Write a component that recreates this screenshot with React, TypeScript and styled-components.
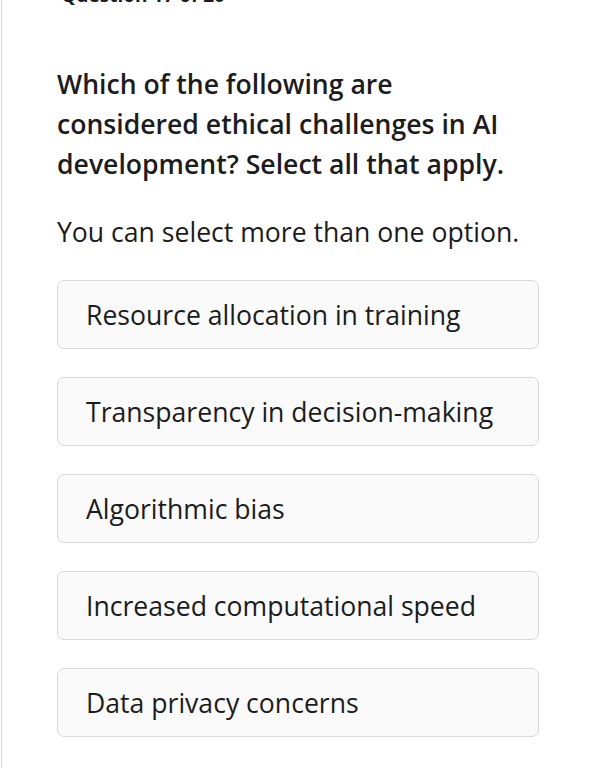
import { createGlobalStyle } from "styled-components";
import styled from "styled-components";

const GlobalStyle = createGlobalStyle`
    html, body {
        margin: 0;
        padding: 0;
        background: #ffffff;
        overflow: hidden;
    }
    body {
        font-family: "Open Sans", "Noto Sans", sans-serif;
        color: #1c1c1c;
    }
`;

const Page = styled.div`
    margin-left: 1px;
    border-left: 1px solid #d4d4d4;
    min-height: calc(100vh + 20px);
    padding: 0 53px 0 55px;
    box-sizing: border-box;
    margin-top: -20px;
`;

const Counter = styled.div`
    font-weight: 700;
    font-size: 19px;
    line-height: 30px;
    padding-left: 4px;
    color: #1c1c1c;
`;

const Question = styled.h2`
    margin: 54px 0 0;
    max-width: 470px;
    font-size: 26.6px;
    font-weight: 600;
    line-height: 40px;
    color: #1c1c1c;
`;

const Hint = styled.p`
    margin: 28px 0 0;
    font-size: 26.6px;
    line-height: 40px;
    color: #1c1c1c;
`;

const OptionList = styled.ul`
    list-style: none;
    margin: 28px 0 0;
    padding: 0;
    display: flex;
    flex-direction: column;
    gap: 28px;
`;

const Option = styled.li`
    height: 69px;
    box-sizing: border-box;
    display: flex;
    align-items: center;
    padding: 0 28px;
    background: #fafafa;
    border: 1px solid #dadada;
    border-radius: 7px;
    font-size: 26.6px;
    color: #1c1c1c;
    cursor: pointer;
`;

const options = [
    { id: 1, label: "Resource allocation in training" },
    { id: 2, label: "Transparency in decision-making" },
    { id: 3, label: "Algorithmic bias" },
    { id: 4, label: "Increased computational speed" },
    { id: 5, label: "Data privacy concerns" },
];

function App() {
    return (
        <>
            <GlobalStyle />
            <Page>
                <Counter>Question 17 of 20</Counter>
                <Question>
                    Which of the following are considered ethical challenges in AI development? Select all that apply.
                </Question>
                <Hint>You can select more than one option.</Hint>
                <OptionList>
                    {options.map((option) => <Option key={option.id}>{option.label}</Option>)}
                </OptionList>
            </Page>
        </>
    );
}

export default App;
